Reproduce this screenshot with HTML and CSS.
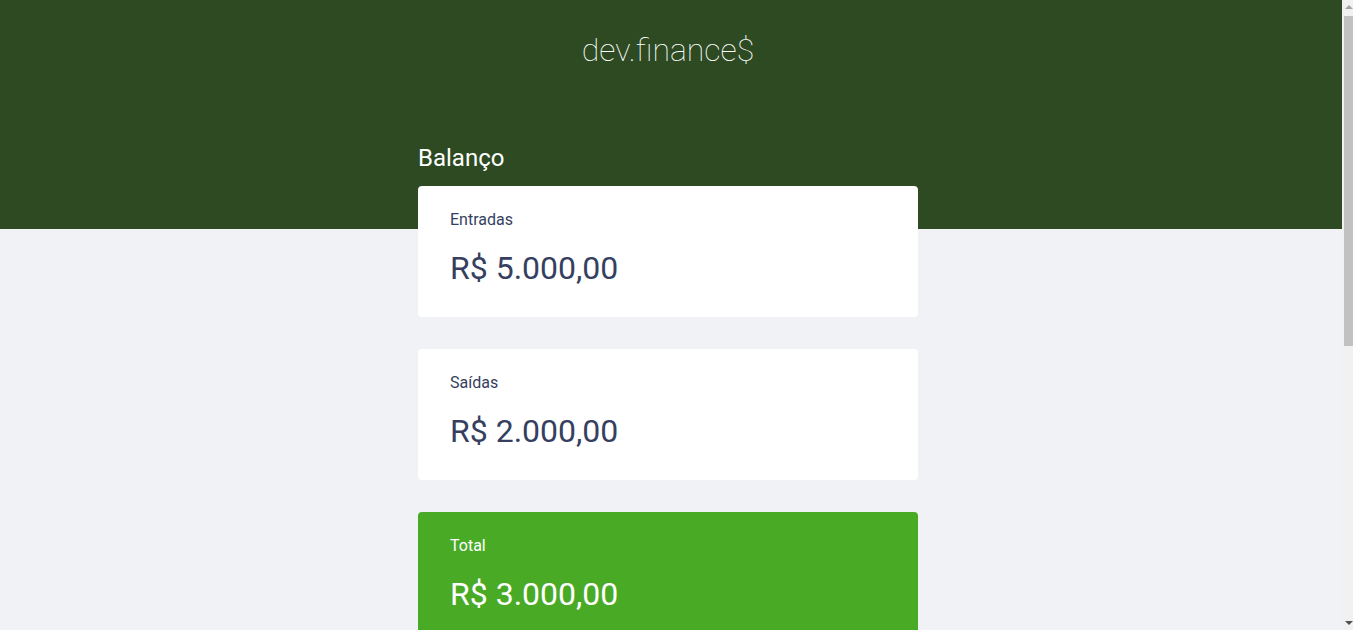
FILE: index.html
```html
<!DOCTYPE html>
<html lang="pt-BR">
<head>
<meta charset="utf-8">
<title>dev.finance$</title>
<link rel="stylesheet" href="styles.css">
</head>
<body>
<header class="header">
  <h1 class="logo">dev.finance$</h1>
</header>
<main class="container">
  <section class="balance">
    <h2 class="balance-title">Balanço</h2>
    <div class="card">
      <h3 class="card-title">Entradas</h3>
      <p class="card-value">R$ 5.000,00</p>
    </div>
    <div class="card">
      <h3 class="card-title">Saídas</h3>
      <p class="card-value">R$ 2.000,00</p>
    </div>
    <div class="card card-total">
      <h3 class="card-title">Total</h3>
      <p class="card-value">R$ 3.000,00</p>
    </div>
  </section>
</main>
<div class="scrollbar" aria-hidden="true">
  <span class="scroll-arrow scroll-up"></span>
  <span class="scroll-thumb"></span>
  <span class="scroll-arrow scroll-down"></span>
</div>
</body>
</html>
```

FILE: styles.css
```css
* { box-sizing: border-box; }
html, body { overflow: hidden; }
body {
  margin: 0;
  padding-right: 11px;
  background: #f0f2f5;
  font-family: Roboto, "Liberation Sans", sans-serif;
  color: #363f5f;
}
.header {
  background: #2d4a22;
  height: 229px;
  padding: 28px 6px 0 0;
  text-align: center;
}
.logo {
  margin: 0;
  color: #fff;
  font-weight: 100;
  font-size: 32px;
  line-height: 44px;
}
.container {
  padding-right: 6px;
  margin-top: -85px;
}
.balance {
  width: 500px;
  margin: 0 auto;
}
.balance-title {
  margin: 0 0 14px;
  color: #fff;
  font-weight: 400;
  font-size: 24px;
  line-height: 28px;
}
.card {
  background: #fff;
  border-radius: 4px;
  padding: 24px 32px;
  margin-bottom: 32px;
  height: 131px;
}
.card-title {
  margin: 0;
  font-weight: 400;
  font-size: 16px;
  line-height: 20px;
}
.card-value {
  margin: 16px 0 0;
  font-size: 32px;
  line-height: 44px;
}
.card-total {
  background: #49aa26;
  color: #fff;
}
.scrollbar {
  position: fixed;
  top: 0;
  right: 0;
  width: 11px;
  height: 100vh;
  background: #f1f1f1;
}
.scroll-thumb {
  position: absolute;
  top: 16px;
  left: 2px;
  right: 0;
  height: 330px;
  background: #c1c1c1;
}
.scroll-arrow {
  position: absolute;
  left: 3px;
  width: 0;
  height: 0;
  border-left: 4px solid transparent;
  border-right: 4px solid transparent;
}
.scroll-up {
  top: 5px;
  border-bottom: 4px solid #a3a3a3;
}
.scroll-down {
  bottom: 5px;
  border-top: 4px solid #505050;
}
```
